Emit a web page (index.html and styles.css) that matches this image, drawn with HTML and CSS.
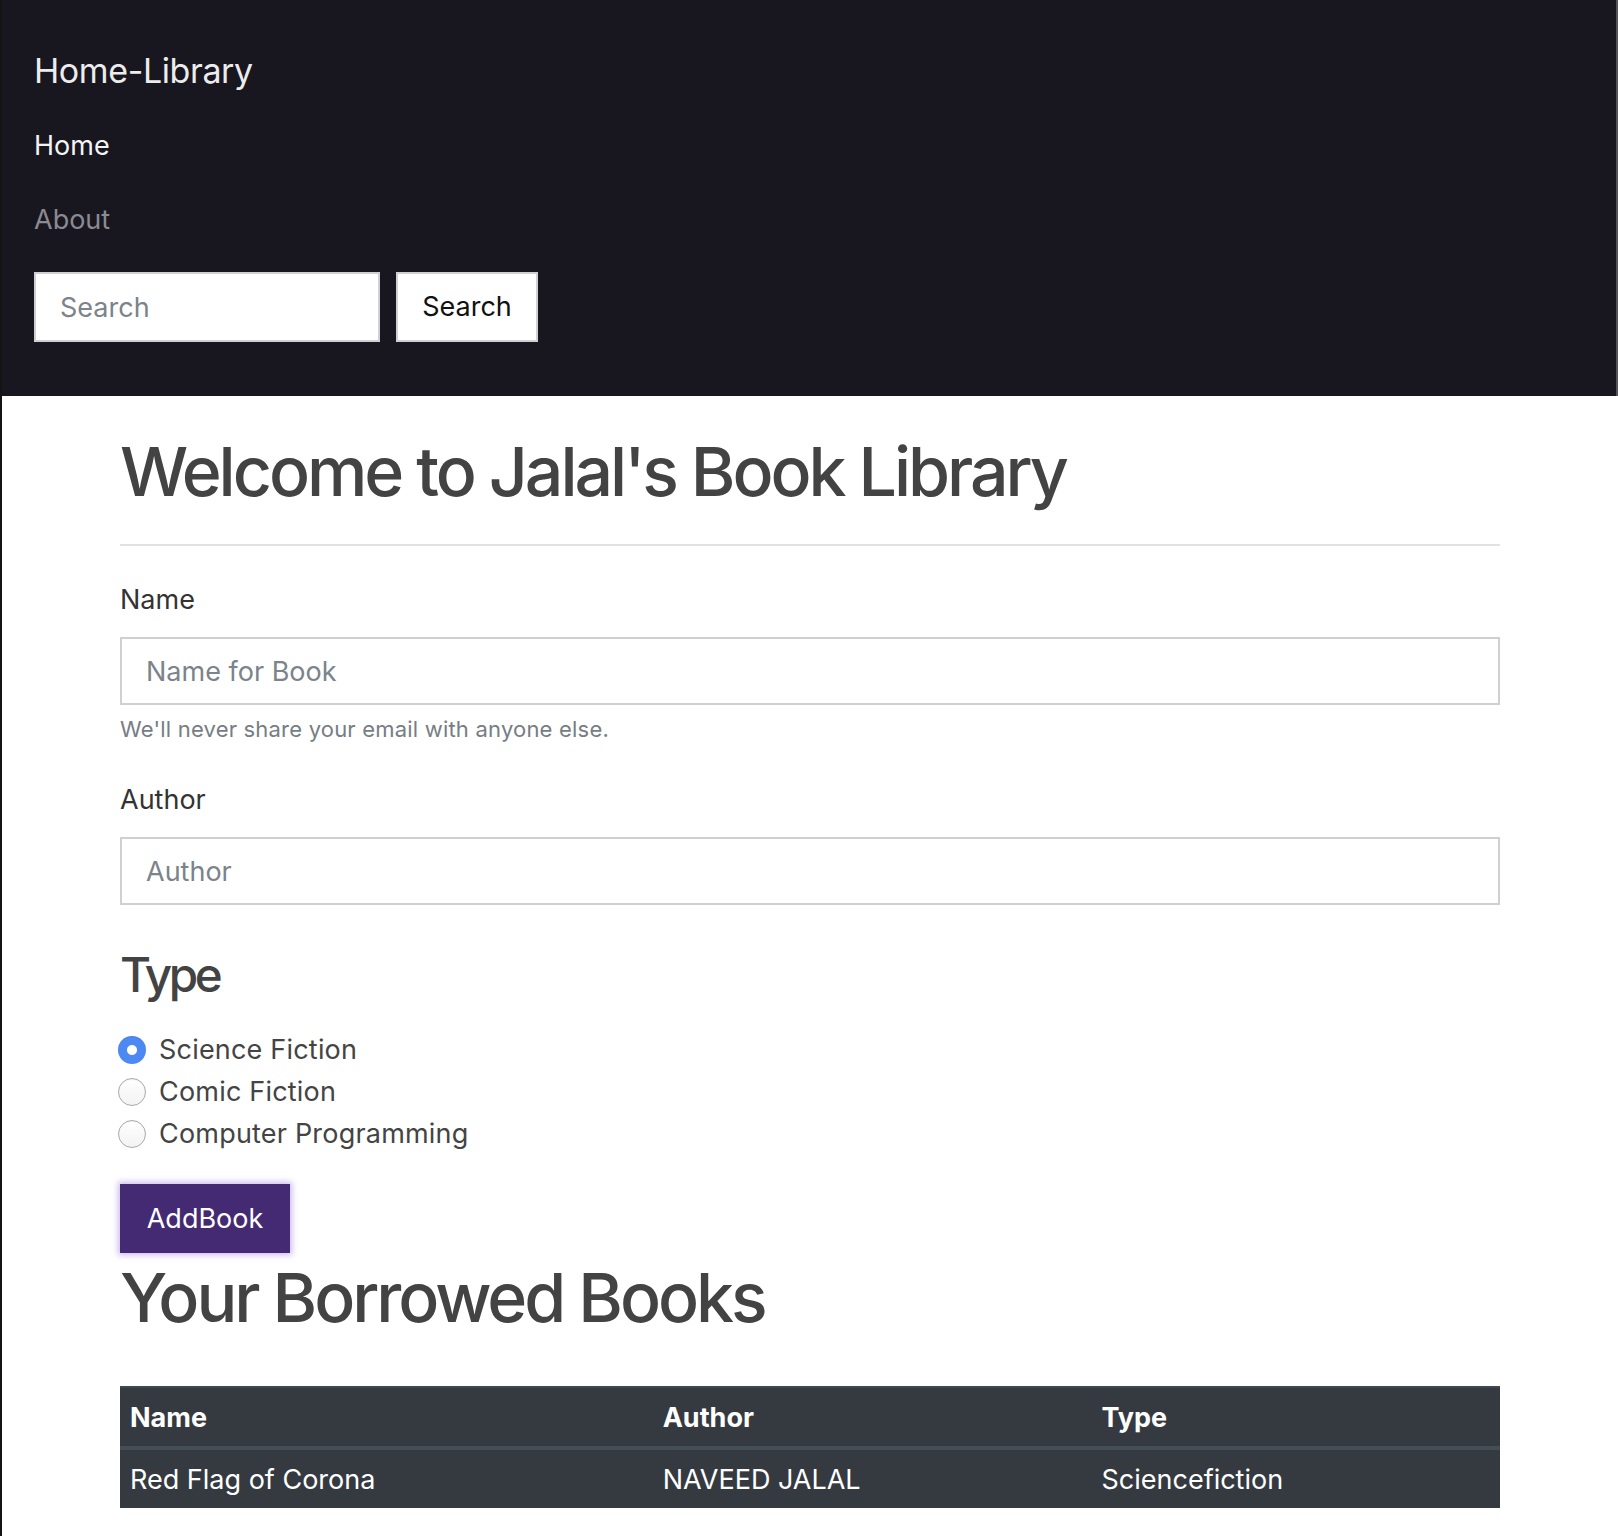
FILE: index.html
```html
<!DOCTYPE html>
<html lang="en">
<head>
<meta charset="utf-8">
<title>Home-Library</title>
<link rel="stylesheet" href="styles.css">
</head>
<body>
<div class="page">
  <nav class="navbar">
    <a class="brand" href="#">Home-Library</a>
    <ul class="nav">
      <li><a class="nav-link active" href="#">Home</a></li>
      <li><a class="nav-link" href="#">About</a></li>
    </ul>
    <form class="search-form">
      <input class="search-input" type="search" placeholder="Search">
      <button class="search-btn" type="button">Search</button>
    </form>
  </nav>

  <main class="container">
    <h1 class="title">Welcome to Jalal's Book Library</h1>
    <hr class="divider">
    <form class="book-form">
      <div class="group group-name">
        <label class="label" for="bookName">Name</label>
        <input class="field" id="bookName" type="text" placeholder="Name for Book">
        <small class="help">We'll never share your email with anyone else.</small>
      </div>
      <div class="group">
        <label class="label" for="author">Author</label>
        <input class="field" id="author" type="text" placeholder="Author">
      </div>
      <h3 class="type-title">Type</h3>
      <div class="radios">
        <label class="radio-row"><input class="radio" type="radio" name="type" checked><span>Science Fiction</span></label>
        <label class="radio-row"><input class="radio" type="radio" name="type"><span>Comic Fiction</span></label>
        <label class="radio-row"><input class="radio" type="radio" name="type"><span>Computer Programming</span></label>
      </div>
      <button class="btn-add" type="button">AddBook</button>
    </form>
    <h1 class="title title-books">Your Borrowed Books</h1>
    <table class="books">
      <thead>
        <tr><th class="col-name">Name</th><th class="col-author">Author</th><th class="col-type">Type</th></tr>
      </thead>
      <tbody>
        <tr><td>Red Flag of Corona</td><td>NAVEED JALAL</td><td>Sciencefiction</td></tr>
      </tbody>
    </table>
  </main>
</div>
</body>
</html>
```

FILE: styles.css
```css
* { box-sizing: border-box; }

html, body {
  margin: 0;
  padding: 0;
  background: #fff;
}

body {
  font-family: Inter, "Noto Sans", "Liberation Sans", sans-serif;
  font-size: 27px;
  line-height: 40px;
  color: #333;
}

.page {
  border-left: 2px solid #141414;
  min-height: 1536px;
}

/* ---------- navbar ---------- */
.navbar {
  background: #18161f;
  border-right: 2px solid #55545a;
  padding: 45px 32px 54px;
}

.brand {
  display: block;
  font-size: 34px;
  line-height: 51px;
  letter-spacing: -0.4px;
  color: #ececec;
  text-decoration: none;
  margin-bottom: 15px;
  width: max-content;
}

.nav {
  list-style: none;
  margin: 0;
  padding: 0;
}

.nav-link {
  display: block;
  padding: 15px 0 19px;
  line-height: 40px;
  color: #8b8a90;
  text-decoration: none;
  width: max-content;
}

.nav-link.active { color: #f4f4f4; }

.search-form {
  display: flex;
  gap: 16px;
  margin-top: 13px;
}

.search-input {
  width: 346px;
  height: 70px;
  border: 2px solid #cfd0d4;
  background: #fff;
  padding: 0 24px;
  font: inherit;
  color: #333;
  border-radius: 0;
  outline: none;
}

.search-input::placeholder,
.field::placeholder { color: #7b838b; }

.search-btn {
  width: 142px;
  height: 70px;
  border: 2px solid #cfd0d4;
  background: #fff;
  color: #111;
  font: inherit;
  padding: 0 24px;
  border-radius: 0;
}

/* ---------- main ---------- */
.container {
  width: 1380px;
  margin: 0 auto;
  padding-top: 34px;
}

.title {
  font-size: 68px;
  line-height: 82px;
  font-weight: 500;
  color: #434343;
  margin: 0;
  letter-spacing: -3.05px;
}

.divider {
  border: 0;
  border-top: 2px solid #e2e2e2;
  margin: 32px 0 34px;
}

.book-form { margin: 0; }

.group { margin-bottom: 41px; }
.group-name { margin-bottom: 35px; }

.label {
  display: block;
  color: #333;
  margin-bottom: 17px;
}

.field {
  display: block;
  width: 100%;
  height: 68px;
  border: 2px solid #cfd0d4;
  padding: 0 24px;
  font: inherit;
  color: #333;
  background: #fff;
  border-radius: 0;
  outline: none;
}

.help {
  display: block;
  margin-top: 9px;
  font-size: 22px;
  line-height: 31px;
  letter-spacing: 0.2px;
  color: #767d84;
}

.type-title {
  font-size: 47.6px;
  line-height: 57px;
  font-weight: 500;
  letter-spacing: -3.4px;
  color: #434343;
  margin: 0 0 26px;
}

.radios {
  display: flex;
  flex-direction: column;
}

.radio-row {
  display: flex;
  align-items: center;
  gap: 13px;
  height: 42px;
  line-height: 42px;
  color: #444;
  letter-spacing: 0.2px;
}

.radio {
  appearance: none;
  -webkit-appearance: none;
  margin: 0 0 0 -2px;
  width: 28px;
  height: 28px;
  border-radius: 50%;
  border: 1.5px solid #a9a9a9;
  background: linear-gradient(#fff, #f3f3f3);
  box-shadow: inset 0 1px 1px rgba(0,0,0,0.06);
  flex: none;
}

.radio:checked {
  border: none;
  background: radial-gradient(circle, #fff 0 4.5px, #4c89f2 5.5px);
}

.btn-add {
  display: block;
  margin-top: 29px;
  width: 170px;
  height: 69px;
  border: 0;
  border-radius: 0;
  background: #442a73;
  color: #fff;
  font: inherit;
  padding: 0;
  box-shadow: 0 0 6px 2px rgba(142, 102, 214, 0.45);
}

.title-books {
  margin-top: 3px;
}

/* ---------- table ---------- */
.books {
  width: 100%;
  margin-top: 48px;
  border-collapse: collapse;
  background: #343a40;
  color: #fff;
  border-top: 2px solid #41474e;
}

.books th,
.books td {
  text-align: left;
  padding: 10px 10px 8px;
  line-height: 40px;
}

.books th {
  font-weight: 700;
  border-bottom: 4px solid #454d55;
}

.col-name { width: 38.6%; }
.col-author { width: 31.8%; }
.col-type { width: 29.6%; }
```
